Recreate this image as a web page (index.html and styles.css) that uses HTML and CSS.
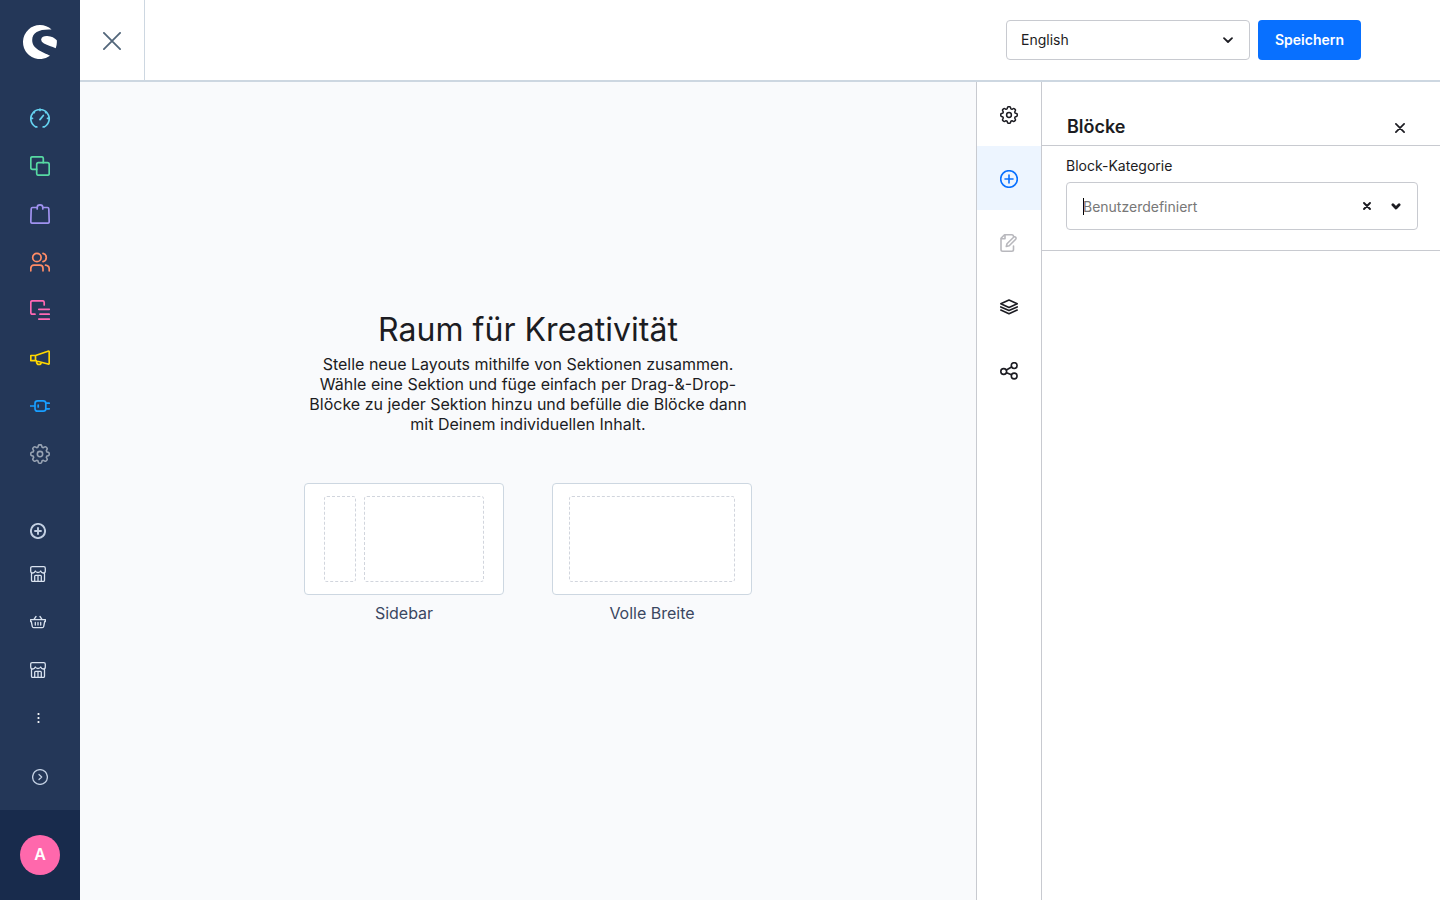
FILE: index.html
```html
<!DOCTYPE html>
<html lang="de">
<head>
<meta charset="utf-8">
<title>Erlebniswelten</title>
<link rel="stylesheet" href="styles.css">
</head>
<body>
<svg class="defs" aria-hidden="true">
  <symbol id="gear" viewBox="-12 -12 24 24">
    <path d="M-2.500-8.200-2-10Q-1.700-11-.8-11H.8Q1.700-11 2-10L2.500-8.200 4-7.600 5.700-8.500Q6.600-9 7.200-8.400L8.400-7.200Q9-6.600 8.500-5.700L7.600-4 8.200-2.500 10-2Q11-1.700 11-.8V.8Q11 1.700 10 2L8.200 2.500 7.600 4 8.500 5.700Q9 6.600 8.400 7.200L7.200 8.400Q6.600 9 5.700 8.500L4 7.600 2.500 8.200 2 10Q1.700 11 .8 11H-.8Q-1.700 11-2 10L-2.500 8.200-4 7.600-5.700 8.500Q-6.600 9-7.200 8.400L-8.400 7.200Q-9 6.600-8.500 5.700L-7.600 4-8.200 2.500-10 2Q-11 1.700-11 .8V-.8Q-11-1.700-10-2L-8.200-2.500-7.600-4-8.500-5.700Q-9-6.600-8.400-7.200L-7.200-8.400Q-6.600-9-5.700-8.500L-4-7.600Z"/>
    <circle r="3.200"/>
  </symbol>
  <symbol id="store" viewBox="0 0 16 16">
    <path d="M1.500 7.500V14.200Q1.500 15.400 2.700 15.400H13.300Q14.500 15.400 14.500 14.200V7.500M.7 5V2.200Q.7.700 2.200.7H13.800Q15.300.7 15.300 2.200V5Q15.300 7 13.200 7 11.500 7 10.700 5 9.800 6.500 8 6.500 6.200 6.500 5.300 5 4.500 7 2.800 7 .7 7 .7 5M4.700 15.400V10.200Q4.700 9.300 5.600 9.300H10.400Q11.300 9.300 11.300 10.200V15.400M8 9.300V15.400"/>
  </symbol>
</svg>
<div class="app">
  <aside class="sidebar">
    <svg class="logo" viewBox="0 0 34 34"><path d="M28.600 4.600A17 17 0 1 0 27 30.800C20 26.800 9.200 24.500 9.200 15C9.200 7 17 4 28.600 4.600Z"/><path d="M18.200 14.200C18.600 11.900 21.300 10.800 24.300 11C28.500 11.200 31.800 13 33.800 15.300Q34.200 19.500 32.700 23.300C29 21.200 24.500 20.400 21 18.400Q17.700 16.500 18.200 14.200Z"/></svg>
    <nav class="main-nav">
      <svg class="nav-icon cyan" viewBox="0 0 20 20"><path d="M6.800 18.900H5.800A9.200 9.200 0 1 1 14.200 18.900H13.200M10 11.600 13.300 7.500M10 1V2.500M.9 10.300H2.500M17.500 10.300H19.100M3.600 4 4.300 4.700M16.400 4 15.700 4.700"/></svg>
      <svg class="nav-icon green" viewBox="0 0 20 20"><rect x="6.700" y="6.700" width="12.500" height="12.500" rx="1.700"/><path d="M6.700 13.300H2.500Q.8 13.300.8 11.600V2.500Q.8.8 2.500.8H11.600Q13.300.8 13.300 2.500V6.700"/></svg>
      <svg class="nav-icon purple" viewBox="0 0 20 20"><path d="M5 3.500H2.600Q1.300 3.500 1.200 4.800L.8 17.500Q.8 19.200 2.500 19.200H17.500Q19.200 19.200 19.200 17.500L18.800 4.800Q18.700 3.500 17.400 3.500H15M7.200 5V3.500Q7.200.9 10 .9T12.800 3.500V5M5 3.500H7.200M12.800 3.500H15"/></svg>
      <svg class="nav-icon orange" viewBox="0 0 20 20"><circle cx="6.900" cy="5.500" r="4.200"/><path d="M.8 18.800V16.500Q.8 13.200 4 13.200H9.800Q13 13.200 13 16.500V18.800M13 1.400A4.200 4.200 0 0 1 13 9.600M15.500 13.200Q19.200 13.700 19.200 17V18.800"/></svg>
      <svg class="nav-icon pink" viewBox="0 0 20 20"><path d="M5 14.200H2.500Q.8 14.200.8 12.500V2.500Q.8.8 2.500.8H12.500Q14.200.8 14.200 2.500V5M8.800 9.300H19.300M10 14.200H19.300M8.800 19.100H19.300"/></svg>
      <svg class="nav-icon yellow" viewBox="0 0 20 20"><path d="M.8 7.500H5.500L18 3.200Q19.200 2.800 19.200 4V15.200Q19.200 16.400 18 16L5.500 12.700H.8ZM5.500 7.500V12.700M6.500 12.900Q6.500 16.500 9 16.500 11 16.400 11.200 14.300"/></svg>
      <svg class="nav-icon blue" viewBox="0 0 20 20"><path d="M.6 10H5M5 7.500Q5 4.800 7.700 4.800H13.200Q15.800 4.800 15.800 7.200V12.800Q15.800 15.200 13.200 15.200H7.700Q5 15.200 5 12.500ZM8.200 9V11M15.800 7.200H19.300M15.800 12.800H19.300"/></svg>
      <svg class="nav-icon grey"><use href="#gear"/></svg>
    </nav>
    <div class="sales">
      <svg class="small-icon bold" viewBox="0 0 16 16"><circle cx="8" cy="8" r="7.100"/><path d="M8 5V11M5 8H11"/></svg>
      <svg class="small-icon"><use href="#store"/></svg>
      <svg class="small-icon" viewBox="0 0 16 16"><path d="M.6 5.600H15.400V7.500H14.700L13.700 12.500Q13.500 13.700 12.300 13.700H3.700Q2.500 13.700 2.300 12.500L1.300 7.500H.6ZM4 5.300 6 2.500M12 5.300 10 2.500M5.300 8.500V11M8 8.500V11M10.700 8.500V11"/></svg>
      <svg class="small-icon"><use href="#store"/></svg>
      <svg class="small-icon dots" viewBox="0 0 16 16"><circle cx="8.500" cy="4" r="1.100"/><circle cx="8.500" cy="8" r="1.100"/><circle cx="8.500" cy="12" r="1.100"/></svg>
    </div>
    <svg class="small-icon collapse" viewBox="0 0 16 16"><circle cx="8" cy="8" r="7.400"/><path d="M7 5.500 9.700 8 7 10.500"/></svg>
    <div class="user"><div class="avatar">A</div></div>
  </aside>
  <div class="workspace">
    <header class="topbar">
      <button class="close"><svg viewBox="0 0 18 18"><path d="M.9.9 17.100 17.100M17.100.9.9 17.100"/></svg></button>
      <div class="actions">
        <div class="language">English<svg viewBox="0 0 12 8"><path d="M2 2.200 6 6 10 2.200"/></svg></div>
        <button class="save">Speichern</button>
      </div>
    </header>
    <div class="editor">
      <main class="stage">
        <h1>Raum für Kreativität</h1>
        <p class="intro">Stelle neue Layouts mithilfe von Sektionen zusammen.<br>Wähle eine Sektion und füge einfach per Drag-&amp;-Drop-<br>Blöcke zu jeder Sektion hinzu und befülle die Blöcke dann<br>mit Deinem individuellen Inhalt.</p>
        <div class="layouts">
          <div class="layout"><div class="preview"><i class="area narrow"></i><i class="area wide"></i></div><span>Sidebar</span></div>
          <div class="layout"><div class="preview"><i class="area full"></i></div><span>Volle Breite</span></div>
        </div>
      </main>
      <nav class="tools">
        <div class="tool"><svg><use href="#gear"/></svg></div>
        <div class="tool active"><svg viewBox="0 0 18 18"><circle cx="9" cy="9" r="8.300"/><path d="M9 5V13M5 9H13"/></svg></div>
        <div class="tool disabled"><svg viewBox="0 0 18 18"><path d="M13.500 2.500Q13.500.8 11.800.8H4.500L1 4.300V15.500Q1 17.200 2.700 17.200H11.800Q13.500 17.200 13.500 15.500V12M5 1V4.700H1.300M7 9.800 13.600 3.200Q14.600 2.300 15.600 3.200T15.700 5.300L9.200 11.800 6.300 12.500Z"/></svg></div>
        <div class="tool"><svg viewBox="0 0 18 18"><path d="M9 2 17.200 5.800 9 9.400.8 5.800ZM.8 8.900 9 12.500 17.200 8.900M.8 12 9 15.700 17.200 12"/></svg></div>
        <div class="tool"><svg viewBox="0 0 18 18"><circle cx="3.700" cy="9.500" r="2.900"/><circle cx="14.200" cy="3.600" r="2.900"/><circle cx="14.200" cy="14" r="2.900"/><path d="M6.400 8 11.500 5M6.500 10.800 11.500 12.800"/></svg></div>
      </nav>
      <aside class="panel">
        <div class="panel-head"><h2>Blöcke</h2><svg viewBox="0 0 10 10"><path d="M.9.9 9.100 9.100M9.100.9.9 9.100"/></svg></div>
        <div class="panel-body">
          <label>Block-Kategorie</label>
          <div class="select"><span class="placeholder">Benutzerdefiniert</span><svg class="clear" viewBox="0 0 8 8"><path d="M1 1 7 7M7 1 1 7"/></svg><svg class="arrow" viewBox="0 0 10 8"><path d="M1.900 2.800 5 6 8.100 2.800"/></svg></div>
        </div>
      </aside>
    </div>
  </div>
</div>
</body>
</html>
```
FILE: styles.css
```css
* { box-sizing: border-box; }
body { margin: 0; font-family: Inter, sans-serif; color: #1c1c22; overflow: hidden; }
svg { display: block; fill: none; stroke: currentColor; stroke-width: 1.6; stroke-linecap: round; stroke-linejoin: round; flex: none; }
button { font-family: inherit; cursor: pointer; }
.defs { position: absolute; width: 0; height: 0; }
.app { display: flex; height: 900px; }

.sidebar { width: 80px; background: #243758; display: flex; flex-direction: column; }
.logo { width: 34px; height: 34px; margin: 25px 0 0 23px; fill: #fff; stroke: none; }
.main-nav { margin-top: 49px; padding-left: 30px; display: flex; flex-direction: column; gap: 28px; }
.nav-icon { width: 20px; height: 20px; stroke-width: 1.7; }
.cyan { color: #65d2f0; }
.green { color: #57d9a3; }
.purple { color: #a092f0; }
.orange { color: #ff8c66; }
.pink { color: #ff68b4; }
.yellow { color: #ffd700; }
.blue { color: #189eff; }
.grey { color: #98a3b3; stroke-width: 1.9; }
.sales { margin-top: 59px; padding-left: 30px; display: flex; flex-direction: column; gap: 32px; color: #d9e2ef; }
.small-icon { width: 16px; height: 16px; stroke-width: 1.3; }
.bold { stroke-width: 1.9; margin-bottom: -5px; color: #c2cfe2; }
.dots { fill: #fff; stroke: none; }
.collapse { margin: 43px 0 0 32px; color: #c2cfe2; }
.user { margin-top: auto; height: 90px; background: #182b4c; display: flex; align-items: center; justify-content: center; }
.avatar { width: 40px; height: 40px; border-radius: 50%; background: #ff68ac; color: #fff; font-size: 16px; font-weight: 600; line-height: 39px; text-align: center; }

.workspace { flex: 1; display: flex; flex-direction: column; }
.topbar { height: 82px; background: #fff; border-bottom: 2px solid #cdd7e1; display: flex; justify-content: space-between; }
.close { width: 65px; height: 80px; padding: 2px 0 0 23px; background: none; border: 0; border-right: 1px solid #cdd7e1; color: #52667a; }
.close svg { width: 18px; height: 18px; stroke-width: 1.8; }
.actions { display: flex; gap: 8px; padding: 20px 79px 0 0; }
.language { width: 244px; height: 40px; padding: 0 15px 1px 14px; border: 1px solid #c8cad0; border-radius: 4px; display: flex; align-items: center; justify-content: space-between; font-size: 14px; }
.language svg { width: 12px; height: 8px; stroke-width: 1.8; }
.save { width: 103px; height: 40px; padding: 0 0 2px; border: 0; border-radius: 4px; background: #0870ff; color: #fff; font-size: 14px; font-weight: 600; }

.editor { flex: 1; display: flex; }
.stage { flex: 1; background: #f9fafc; display: flex; flex-direction: column; align-items: center; text-align: center; }
h1 { margin: 228px 0 0; font-size: 32px; line-height: 40px; font-weight: 400; letter-spacing: .05px; }
.intro { margin: 4px 0 0; font-size: 16px; line-height: 20px; }
.layouts { display: flex; gap: 48px; margin-top: 49px; }
.layout { width: 200px; color: #3b4761; font-size: 16px; line-height: 20px; }
.preview { height: 112px; margin-bottom: 8px; background: #fff; border: 1px solid #cdd7e1; border-radius: 4px; display: flex; justify-content: center; gap: 8px; padding-top: 12px; }
.area { height: 86px; border: 1px dashed #d1d5dd; border-radius: 3px; }
.narrow { width: 32px; }
.wide { width: 120px; }
.full { width: 166px; }

.tools { width: 66px; background: #fff; border-left: 1px solid #c8cad0; border-right: 1px solid #c8cad0; }
.tool { height: 64px; display: flex; align-items: center; justify-content: center; padding-top: 2px; }
.tool svg { width: 18px; height: 18px; }
.tool:first-child svg { stroke-width: 2; }
.active { background: #edf5ff; color: #0870ff; }
.disabled { color: #b8b8bd; }

.panel { width: 398px; background: #fff; }
.panel-head { height: 64px; padding: 26px 35px 0 25px; border-bottom: 1px solid #c8cad0; display: flex; align-items: center; justify-content: space-between; }
h2 { margin: 0; font-size: 18px; line-height: 24px; font-weight: 600; }
.panel-head svg { width: 10px; height: 10px; margin-top: 3px; stroke-width: 1.7; }
.panel-body { height: 105px; padding: 10px 22px 0 24px; border-bottom: 1px solid #c8cad0; }
label { display: block; font-size: 14px; line-height: 20px; margin-bottom: 6px; }
.select { height: 48px; padding: 0 16px; border: 1px solid #c8cad0; border-radius: 4px; display: flex; align-items: center; }
.placeholder { flex: 1; box-shadow: inset 1px 0 #000; font-size: 14px; line-height: 17px; color: #777; }
.clear { width: 8px; height: 8px; margin-right: 20px; stroke-width: 1.9; }
.arrow { width: 10px; height: 8px; stroke-width: 2.8; }
```
